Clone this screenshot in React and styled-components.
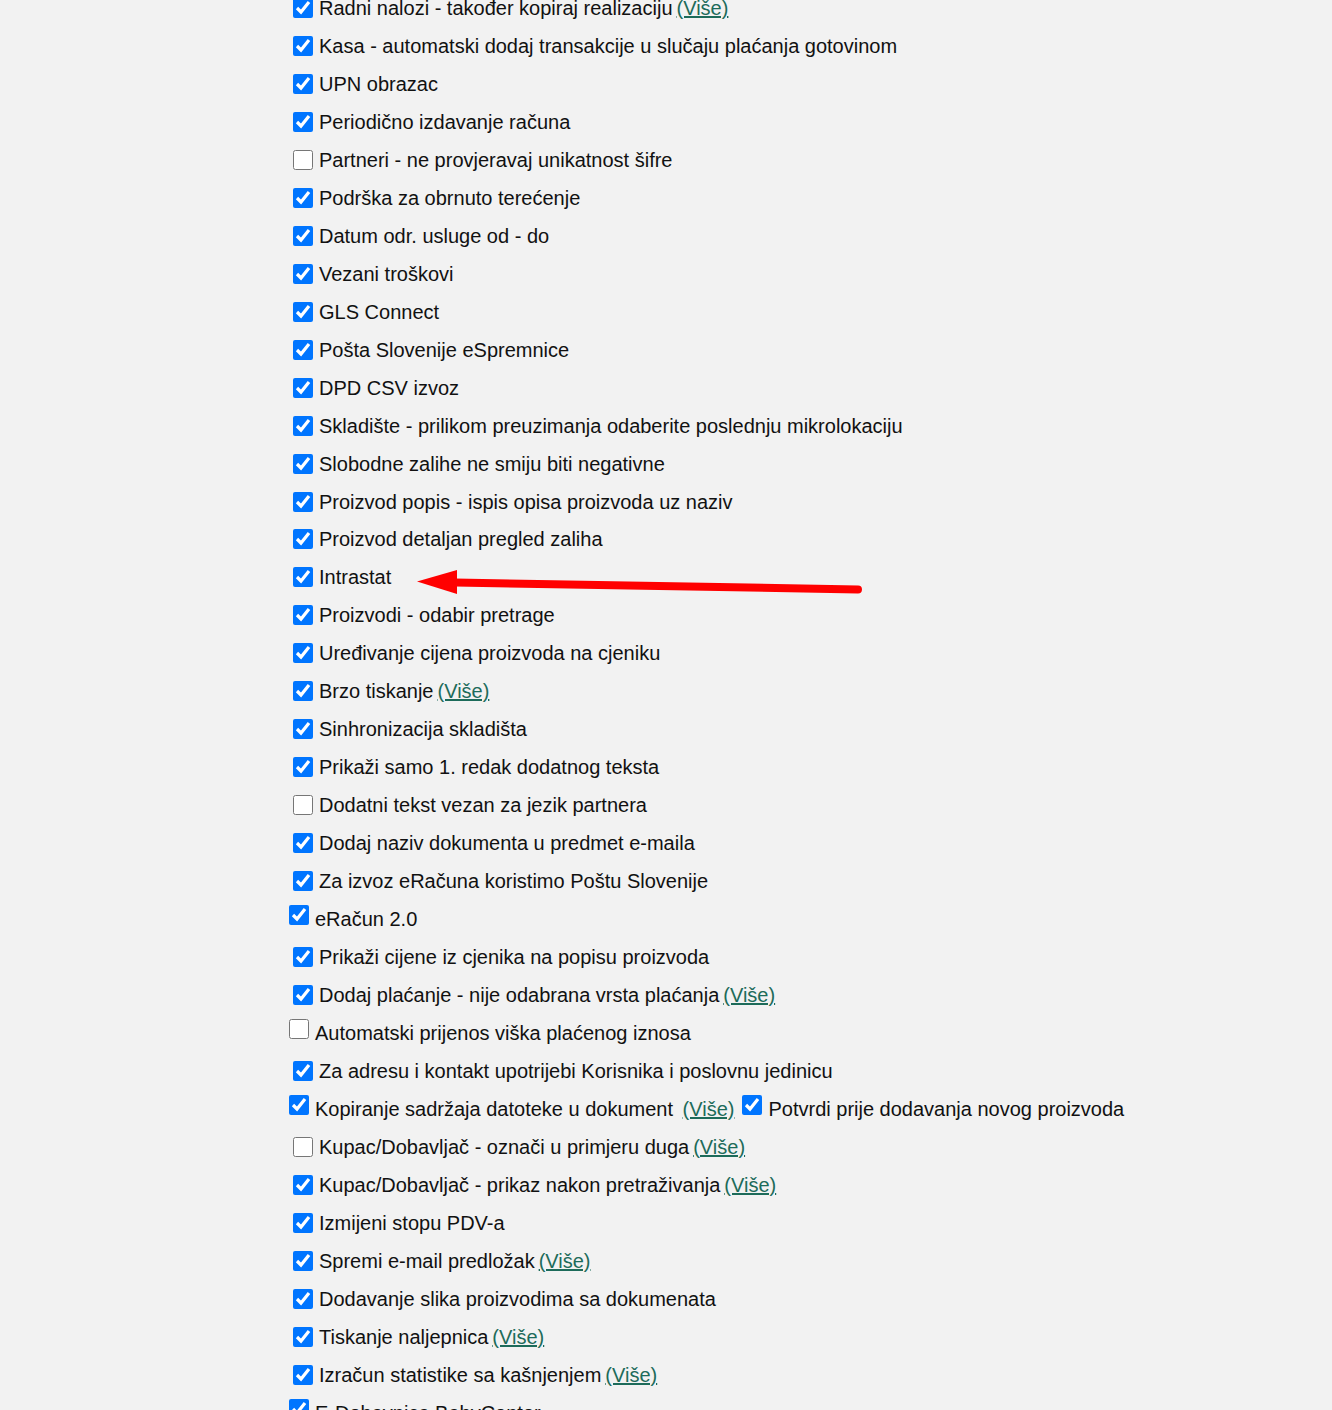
import styled, { createGlobalStyle } from 'styled-components';

const GlobalStyle = createGlobalStyle`
  html, body {
    margin: 0;
    padding: 0;
    background: #f2f2f2;
  }
  body {
    font-family: "Liberation Sans", Arial, sans-serif;
    overflow: hidden;
  }
`

const Page = styled.div`
  position: relative;
  height: 1410px;
  overflow: hidden;
`

const List = styled.div`
  display: flex;
  flex-direction: column;
  margin-top: -11px;
  padding-left: 293px;
`

const Row = styled.label`
  display: flex;
  align-items: center;
  height: ${p => (p.$short ? '37px' : '38px')};
  margin-left: ${p => (p.$inline ? '-4px' : '0')};
  font-size: 20px;
  color: #111;
  white-space: pre;
`

const Check = styled.input.attrs({ type: 'checkbox', readOnly: true })`
  width: 20px;
  height: 20px;
  margin: 0 6px ${p => (p.$inline ? '8px' : '0')} 0;
  accent-color: #0075ff;
  flex-shrink: 0;
`

const Label = styled.span`
  line-height: 24px;
`

const More = styled.a`
  margin-left: 4px;
  color: #1d6b5a;
  text-decoration: underline;
  line-height: 24px;
  cursor: pointer;
`

const Spacer = styled.span`
  width: 8px;
`

const Arrow = styled.svg`
  position: absolute;
  left: 0;
  top: 0;
  pointer-events: none;
`

const options = [
  { text: 'Radni nalozi - također kopiraj realizaciju', link: true },
  { text: 'Kasa - automatski dodaj transakcije u slučaju plaćanja gotovinom' },
  { text: 'UPN obrazac' },
  { text: 'Periodično izdavanje računa' },
  { text: 'Partneri - ne provjeravaj unikatnost šifre', off: true },
  { text: 'Podrška za obrnuto terećenje' },
  { text: 'Datum odr. usluge od - do' },
  { text: 'Vezani troškovi' },
  { text: 'GLS Connect' },
  { text: 'Pošta Slovenije eSpremnice' },
  { text: 'DPD CSV izvoz' },
  { text: 'Skladište - prilikom preuzimanja odaberite poslednju mikrolokaciju' },
  { text: 'Slobodne zalihe ne smiju biti negativne' },
  { text: 'Proizvod popis - ispis opisa proizvoda uz naziv', short: true },
  { text: 'Proizvod detaljan pregled zaliha' },
  { text: 'Intrastat' },
  { text: 'Proizvodi - odabir pretrage' },
  { text: 'Uređivanje cijena proizvoda na cjeniku' },
  { text: 'Brzo tiskanje', link: true },
  { text: 'Sinhronizacija skladišta' },
  { text: 'Prikaži samo 1. redak dodatnog teksta' },
  { text: 'Dodatni tekst vezan za jezik partnera', off: true },
  { text: 'Dodaj naziv dokumenta u predmet e-maila' },
  { text: 'Za izvoz eRačuna koristimo Poštu Slovenije' },
  { text: 'eRačun 2.0', inline: true },
  { text: 'Prikaži cijene iz cjenika na popisu proizvoda' },
  { text: 'Dodaj plaćanje - nije odabrana vrsta plaćanja', link: true },
  { text: 'Automatski prijenos viška plaćenog iznosa', inline: true, off: true },
  { text: 'Za adresu i kontakt upotrijebi Korisnika i poslovnu jedinicu' },
  {
    text: 'Kopiranje sadržaja datoteke u dokument ',
    link: true,
    inline: true,
    extra: 'Potvrdi prije dodavanja novog proizvoda',
  },
  { text: 'Kupac/Dobavljač - označi u primjeru duga', link: true, off: true },
  { text: 'Kupac/Dobavljač - prikaz nakon pretraživanja', link: true },
  { text: 'Izmijeni stopu PDV-a' },
  { text: 'Spremi e-mail predložak', link: true },
  { text: 'Dodavanje slika proizvodima sa dokumenata' },
  { text: 'Tiskanje naljepnica', link: true },
  { text: 'Izračun statistike sa kašnjenjem', link: true },
  { text: 'E-Dobavnica BabyCenter', inline: true },
]

const Option = ({ option }) => (
  <Row $inline={option.inline} $short={option.short}>
    <Check $inline={option.inline} defaultChecked={!option.off} />
    <Label>{option.text}</Label>
    {option.link && <More>(Više)</More>}
    {option.extra && (
      <>
        <Spacer />
        <Check $inline defaultChecked />
        <Label>{option.extra}</Label>
      </>
    )}
  </Row>
)

const App = () => {
  return (
    <Page>
      <GlobalStyle />
      <List>
        {options.map(option => (
          <Option option={option} key={option.text} />
        ))}
      </List>
      <Arrow width="1332" height="1410" viewBox="0 0 1332 1410">
        <line x1="455" y1="582.5" x2="858" y2="589.5" stroke="#ff0000" strokeWidth="8" strokeLinecap="round" />
        <polygon points="417,581.5 457,570 457,594" fill="#ff0000" />
      </Arrow>
    </Page>
  )
}

export default App
